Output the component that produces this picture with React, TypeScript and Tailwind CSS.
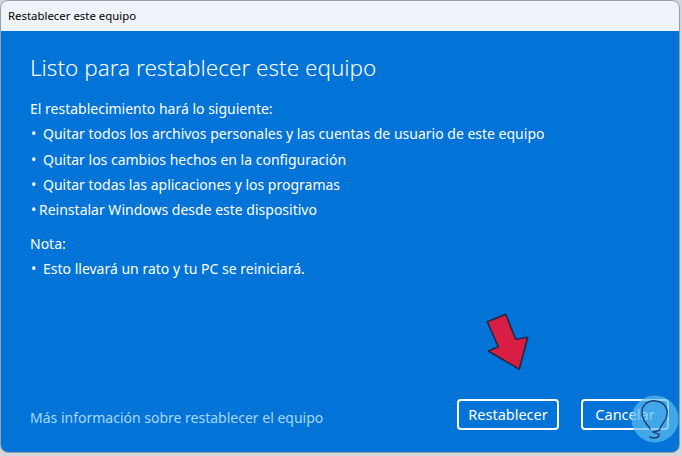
import React from 'react';

const items = [
  { text: 'Quitar todos los archivos personales y las cuentas de usuario de este equipo', gap: true },
  { text: 'Quitar los cambios hechos en la configuración', gap: true },
  { text: 'Quitar todas las aplicaciones y los programas', gap: true },
  { text: 'Reinstalar Windows desde este dispositivo', gap: false },
];

const Bullet: React.FC<{ text: string; gap: boolean }> = ({ text, gap }) => (
  <div className="flex h-[25.3px] items-center">
    <span className={`pl-[1px] ${gap ? 'w-[13px]' : 'w-[9px]'}`}>•</span>
    <span>{text}</span>
  </div>
);

const Arrow = () => (
  <svg className="absolute left-[480px] top-[308px]" width="56" height="70" viewBox="480 308 56 70">
    <polygon
      points="487.3,321.7 505.7,314.3 515.7,339.3 527.7,337.3 519.3,369.3 488.3,351 498.3,346.7"
      fill="#d81e42"
      stroke="#1b2a48"
      strokeWidth="1.6"
      strokeLinejoin="round"
    />
  </svg>
);

const Watermark = () => (
  <svg className="absolute left-[630px] top-[394px]" width="50" height="50" viewBox="0 0 50 50">
    <circle cx="25" cy="25" r="23.5" fill="#5cbdf0" fillOpacity="0.7" />
    <path
      d="M20 35 C18 30 11 27 12 17 C13 9 20 6 26 7 C34 8 38 14 37 21 C36 28 31 30 30 35 C29 38 24 37 23 38 C26 40 30 39 29 42 C27 45 22 44 20 43"
      fill="none"
      stroke="#1c3f73"
      strokeWidth="1.4"
      strokeLinecap="round"
    />
  </svg>
);

export default function App() {
  return (
    <div className="relative h-[456px] w-[682px] overflow-hidden bg-[#d4d6da] font-['Segoe_UI','Noto_Sans',sans-serif]">
      <div className="flex h-[453px] w-[680px] flex-col overflow-hidden rounded-lg border border-[#9aa0a8]">
        <div className="flex h-[30px] shrink-0 items-center bg-[#eef2f9] pl-[7px] text-[11.4px] text-black">
          Restablecer este equipo
        </div>
        <div className="flex flex-1 flex-col bg-[#0273d7] pl-[29px] pr-[10px] text-white">
          <h1 className="mt-[20px] text-[22.5px] font-light leading-[34px]">Listo para restablecer este equipo</h1>
          <div className="mt-[11px] text-[14px]">
            <div className="flex h-[25.3px] items-center">El restablecimiento hará lo siguiente:</div>
            {items.map((it) => (
              <Bullet key={it.text} text={it.text} gap={it.gap} />
            ))}
            <div className="mt-[8px] flex h-[25.3px] items-center">Nota:</div>
            <Bullet text="Esto llevará un rato y tu PC se reiniciará." gap={true} />
          </div>
          <div className="flex-1" />
          <div className="mb-[22px] flex items-center">
            <span className="mt-[5px] flex-1 text-[14px] text-[#a9d8ff]">Más información sobre restablecer el equipo</span>
            <button className="h-[31px] w-[102px] rounded-[4px] border-2 border-white text-[14.5px] text-white">
              Restablecer
            </button>
            <button className="ml-[22px] h-[31px] w-[88px] rounded-[4px] border-2 border-white text-[14.5px] text-white">
              Cancelar
            </button>
          </div>
        </div>
      </div>
      <Arrow />
      <Watermark />
    </div>
  );
}
